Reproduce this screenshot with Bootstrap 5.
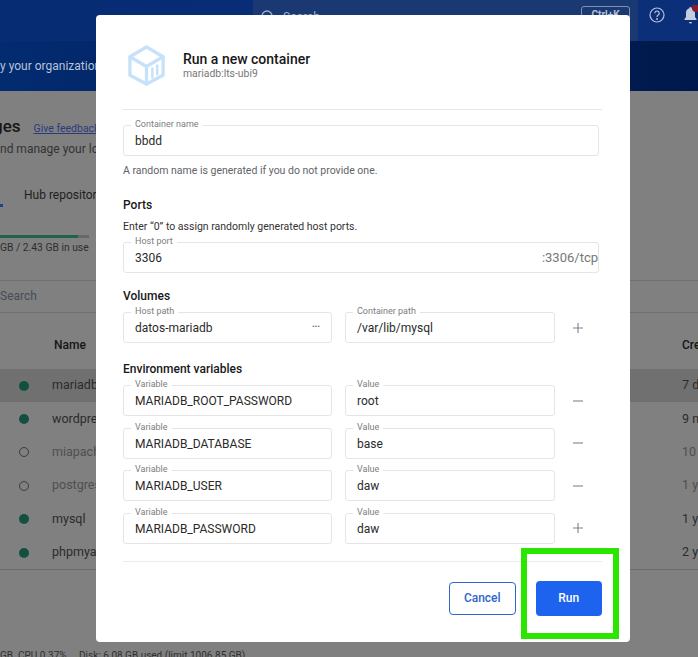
<!DOCTYPE html>
<html lang="en">
<head>
    <meta charset="UTF-8">
    <meta name="viewport" content="width=device-width, initial-scale=1.0">
    <title>Run a new container</title>
    <link href="https://cdn.jsdelivr.net/npm/bootstrap@5.3.0/dist/css/bootstrap.min.css" rel="stylesheet">
    <style>
        html, body { height: 657px; overflow: hidden; }
        body { font-family: Roboto, "Liberation Sans", sans-serif; background: #808080; color: #1c1c1c; position: relative; }

        /* page behind the dialog */
        .top-strip { height: 41px; background: linear-gradient(90deg, #062c74, #0c2f7a); }
        .search-zone { margin-left: 253px; width: 385px; height: 41px; background: #1a3972; color: #9fb0cc; font-size: 12px; padding: 6px 0 0 8px; }
        .key-hint { margin-left: auto; margin-right: 8px; width: 49px; height: 18px; border: 1px solid #7f93b5; border-radius: 3px; font-size: 10px; font-weight: 700; text-align: center; color: #b4c0d6; }
        .top-icon { position: absolute; top: 5px; }
        .sub-strip { height: 50px; background: linear-gradient(90deg, #032b70, #00194c); color: #b7c3da; font-size: 12px; line-height: 50px; }
        .page-title { height: 50px; padding-top: 21px; margin-left: -7px; font-size: 17px; font-weight: 500; color: #161616; line-height: 28px; }
        .feedback-link { font-size: 10.5px; font-weight: 400; color: #2c3a7c; margin-left: 13px; }
        .page-sub { font-size: 12px; color: #333; line-height: 16px; height: 16px; }
        .hub-tab { height: 78px; padding: 30px 0 0 24px; font-size: 12px; color: #1e1e1e; line-height: 16px; position: relative; }
        .tab-mark { position: absolute; left: 0; top: 47px; width: 3px; height: 3px; background: #1f3f97; }
        .disk-bar { width: 89px; height: 3px; background: #686868; }
        .disk-fill { height: 3px; background: #1d6350; }
        .disk-text { font-size: 10.3px; color: #2e2e2e; margin-top: 3px; line-height: 14px; height: 39px; }
        .search-strip { height: 33px; border-top: 1px solid #707070; border-bottom: 1px solid #707070; font-size: 12px; color: #474c54; line-height: 31px; }
        .head-row { height: 56px; padding: 24px 0 0 54px; font-size: 12px; font-weight: 500; color: #161616; line-height: 16px; }
        .img-row { height: 33.4px; padding: 0 0 0 19px; font-size: 12.5px; color: #2b2b2b; }
        .img-row.is-open { background: #707070; }
        .img-row.is-off { color: #4f4f4f; }
        .img-list { border-bottom: 1px solid #6c6c6c; }
        .state-dot { width: 10px; height: 10px; border-radius: 50%; background: #14503f; margin-right: 23px; flex: none; }
        .is-off .state-dot { background: none; border: 1px solid #3c3c3c; }
        .made-cell { margin-left: auto; width: 16px; overflow: hidden; white-space: nowrap; }
        .foot-strip { position: absolute; left: 0; right: 0; bottom: -6px; font-size: 10px; color: #303030; line-height: 14px; white-space: pre; }

        /* dialog */
        .run-dialog { position: absolute; left: 96px; top: 15px; width: 534px; height: 627px; border: 0; border-radius: 4px; padding: 0 28px 0 27px; display: block; background: #fff; color: #181818; }
        .dialog-head { height: 95px; border-bottom: 1px solid #e6e6e6; padding-top: 29px; gap: 17px; }
        .dialog-head svg { margin-left: 4px; flex: none; }
        .dialog-title { font-size: 14px; font-weight: 500; line-height: 16px; margin-top: 7px; }
        .dialog-image { font-size: 10.4px; color: #777; line-height: 13px; }
        .out-field { position: relative; height: 31px; }
        .out-field .form-control { height: 31px; border: 1px solid #e5e5e5; border-radius: 3px; padding: 0 11px; font-size: 12px; line-height: 31px; color: #2a2a2a; background: #fff; }
        .out-label { position: absolute; left: 8px; top: -6px; padding: 0 4px; background: #fff; font-size: 9px; line-height: 11px; color: #7d7d7d; }
        .field-tail { position: absolute; right: 1px; top: 0; font-size: 13px; line-height: 31px; color: #777; }
        .dots-tail { position: absolute; right: 12px; top: 0; font-size: 8px; line-height: 29px; color: #6b7178; }
        .note-text { font-size: 10.5px; line-height: 14px; color: #5f6368; }
        .note-dark { color: #333; }
        .part-title { font-size: 12px; font-weight: 500; line-height: 16px; color: #181818; }
        .field-grid { display: grid; grid-template-columns: 209px 210px 47px; column-gap: 13px; row-gap: 11.67px; width: 479px; }
        .row-act { color: #7c858f; display: flex; align-items: center; margin-left: 4px; }
        .wide-field { width: 476px; }
        .head-gap { margin-top: 15px; }
        .dialog-foot { height: 55px; border-top: 1px solid #ececec; margin-top: 17px; padding-top: 20px; width: 479px; }
        .btn-cancel { width: 67px; height: 33px; margin-left: 326px; padding: 0; border: 1px solid #2e66c9; border-radius: 4px; color: #2e66c9; font-size: 12px; font-weight: 500; background: #fff; }
        .btn-run { width: 67px; height: 35px; margin-left: 20px; margin-top: -1px; padding: 0; border: 0; border-radius: 4px; background: #1d63ed; color: #fff; font-size: 12px; font-weight: 500; }
        .green-frame { position: absolute; left: 521px; top: 548px; width: 98px; height: 91px; border: 6px solid #2ae600; }
    </style>
</head>
<body>
    <div class="top-strip">
        <div class="search-zone d-flex align-items-start">
            <svg class="mt-1" width="14" height="14" viewBox="0 0 14 14" fill="none" stroke="#9fb0cc" stroke-width="1.3"><circle cx="6" cy="6" r="5"/><path d="M10 10l3 3"/></svg>
            <span class="ms-2 mt-1 lh-sm">Search</span>
            <span class="key-hint">Ctrl+K</span>
        </div>
        <svg class="top-icon" style="left:648px" width="18" height="20" viewBox="0 0 18 20" fill="none" stroke="#b7c3da" stroke-width="1.2"><circle cx="9" cy="10" r="7"/><path d="M6.8 8.2a2.2 2.2 0 1 1 3.4 1.9c-.8.5-1.200.9-1.200 1.800"/><circle cx="9" cy="14" r=".4"/></svg>
        <svg class="top-icon" style="left:683px" width="15" height="20" viewBox="0 0 15 20"><path d="M7.5 2a1.2 1.2 0 0 1 1.2 1.2c2.3.6 3.3 2.4 3.3 4.8v4l1.5 2v1H1.500v-1l1.500-2V8c0-2.400 1-4.200 3.300-4.800A1.200 1.200 0 0 1 7.500 2zM6 17h3a1.500 1.500 0 0 1-3 0z" fill="#c3cde0"/><circle cx="13" cy="3" r="4" fill="#8c1c2c"/></svg>
    </div>
    <div class="sub-strip">y your organization</div>
    <div class="page-title">ges<a href="#" class="feedback-link">Give feedback</a></div>
    <div class="page-sub">nd manage your lo</div>
    <div class="hub-tab"><span class="tab-mark"></span>Hub repository</div>
    <div class="disk-bar"><div class="disk-fill" style="width:88%"></div></div>
    <div class="disk-text">GB / 2.43 GB in use</div>
    <div class="search-strip">Search</div>
    <div class="head-row d-flex"><span>Name</span><span class="made-cell">Created</span></div>
    <div class="img-list">
        <div class="img-row is-open d-flex align-items-center"><span class="state-dot"></span>mariadb<span class="made-cell">7 days</span></div>
        <div class="img-row d-flex align-items-center"><span class="state-dot"></span>wordpress<span class="made-cell">9 months</span></div>
        <div class="img-row is-off d-flex align-items-center"><span class="state-dot"></span>miapache<span class="made-cell">10 months</span></div>
        <div class="img-row is-off d-flex align-items-center"><span class="state-dot"></span>postgres<span class="made-cell">1 year</span></div>
        <div class="img-row d-flex align-items-center"><span class="state-dot"></span>mysql<span class="made-cell">1 year</span></div>
        <div class="img-row d-flex align-items-center"><span class="state-dot"></span>phpmyadmin<span class="made-cell">2 years</span></div>
    </div>
    <div class="foot-strip">GB  CPU 0.37%     Disk: 6.08 GB used (limit 1006.85 GB)</div>

    <div class="modal-content run-dialog">
        <div class="dialog-head d-flex">
            <svg width="39" height="43" viewBox="0 0 40 42" fill="none" stroke="#c6e2fa" stroke-width="3.4" stroke-linejoin="round" stroke-linecap="round">
                <path d="M20 2l17 10v19L20 40 3 31V12z"/>
                <path d="M3 12l17 10 17-10M20 22v18"/>
                <path d="M26 24v9M31 21v9" stroke-width="2.6"/>
            </svg>
            <div>
                <div class="dialog-title">Run a new container</div>
                <div class="dialog-image">mariadb:lts-ubi9</div>
            </div>
        </div>

        <div class="out-field wide-field head-gap">
            <span class="out-label">Container name</span>
            <div class="form-control">bbdd</div>
        </div>
        <div class="note-text" style="margin-top:8px">A random name is generated if you do not provide one.</div>

        <div class="part-title" style="margin-top:19px">Ports</div>
        <div class="note-text note-dark" style="margin-top:7px">Enter “0” to assign randomly generated host ports.</div>
        <div class="out-field wide-field" style="margin-top:8px">
            <span class="out-label">Host port</span>
            <div class="form-control">3306</div>
            <span class="field-tail">:3306/tcp</span>
        </div>

        <div class="part-title" style="margin-top:15px">Volumes</div>
        <div class="field-grid" style="margin-top:8px">
            <div class="out-field"><span class="out-label">Host path</span><div class="form-control">datos-mariadb</div><span class="dots-tail">•••</span></div>
            <div class="out-field"><span class="out-label">Container path</span><div class="form-control">/var/lib/mysql</div></div>
            <div class="row-act"><svg width="12" height="12" viewBox="0 0 12 12" stroke="currentColor" stroke-width="1.1"><path d="M6 1v10M1 6h10"/></svg></div>
        </div>

        <div class="part-title" style="margin-top:18px">Environment variables</div>
        <div class="field-grid" style="margin-top:8px">
            <div class="out-field"><span class="out-label">Variable</span><div class="form-control">MARIADB_ROOT_PASSWORD</div></div>
            <div class="out-field"><span class="out-label">Value</span><div class="form-control">root</div></div>
            <div class="row-act"><svg width="12" height="12" viewBox="0 0 12 12" stroke="currentColor" stroke-width="1.1"><path d="M1 6h10"/></svg></div>

            <div class="out-field"><span class="out-label">Variable</span><div class="form-control">MARIADB_DATABASE</div></div>
            <div class="out-field"><span class="out-label">Value</span><div class="form-control">base</div></div>
            <div class="row-act"><svg width="12" height="12" viewBox="0 0 12 12" stroke="currentColor" stroke-width="1.1"><path d="M1 6h10"/></svg></div>

            <div class="out-field"><span class="out-label">Variable</span><div class="form-control">MARIADB_USER</div></div>
            <div class="out-field"><span class="out-label">Value</span><div class="form-control">daw</div></div>
            <div class="row-act"><svg width="12" height="12" viewBox="0 0 12 12" stroke="currentColor" stroke-width="1.1"><path d="M1 6h10"/></svg></div>

            <div class="out-field"><span class="out-label">Variable</span><div class="form-control">MARIADB_PASSWORD</div></div>
            <div class="out-field"><span class="out-label">Value</span><div class="form-control">daw</div></div>
            <div class="row-act"><svg width="12" height="12" viewBox="0 0 12 12" stroke="currentColor" stroke-width="1.1"><path d="M6 1v10M1 6h10"/></svg></div>
        </div>

        <div class="dialog-foot d-flex align-items-start">
            <button type="button" class="btn btn-cancel">Cancel</button>
            <button type="button" class="btn btn-run">Run</button>
        </div>
    </div>
    <div class="green-frame"></div>

    <script src="https://cdn.jsdelivr.net/npm/bootstrap@5.3.0/dist/js/bootstrap.bundle.min.js"></script>
</body>
</html>
